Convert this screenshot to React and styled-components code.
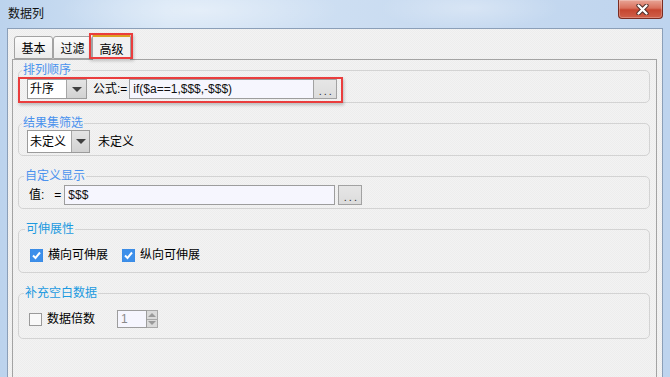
import React from 'react';
import styled, { createGlobalStyle } from 'styled-components';

const GlobalStyle = createGlobalStyle`
  html, body {
    margin: 0;
    padding: 0;
  }
  body {
    width: 670px;
    height: 377px;
    overflow: hidden;
    background: #c6daf0;
    font-family: "Liberation Sans", "Noto Sans CJK SC", sans-serif;
    font-size: 12px;
    color: #000;
  }
`;

const Window = styled.div`
  width: 670px;
  height: 377px;
  box-sizing: border-box;
  display: flex;
  flex-direction: column;
  padding: 0 7px;
  background:
    radial-gradient(ellipse 140px 30px at 200px 10px, rgba(255, 255, 255, 0.4), transparent),
    radial-gradient(ellipse 90px 22px at 470px 8px, rgba(255, 255, 255, 0.3), transparent),
    linear-gradient(90deg, #bcd3ed 0%, #d4e4f5 25%, #cadcf1 60%, #bed4ee 100%);
`;

const TitleBar = styled.div`
  height: 28px;
  flex: none;
  display: flex;
  justify-content: space-between;
  align-items: flex-start;
`;

const Caption = styled.div`
  padding: 6px 0 0 1px;
  font-size: 12px;
  line-height: 16px;
  color: #111;
`;

const CloseButton = styled.div`
  width: 45px;
  height: 19px;
  box-sizing: border-box;
  border: 1px solid #7a2c22;
  border-top: none;
  border-radius: 0 0 4px 4px;
  background: linear-gradient(180deg, #e8a596 0%, #d9705c 45%, #c64630 55%, #d0604a 100%);
  box-shadow: inset 0 0 0 1px rgba(255, 255, 255, 0.25);
  display: flex;
  align-items: center;
  justify-content: center;
  padding-left: 3px;
`;

const Client = styled.div`
  flex: 1;
  display: flex;
  flex-direction: column;
  min-height: 0;
  border: 1px solid #8b9fb8;
  border-bottom: none;
  padding: 4px 5px 0 4px;
  background-color: #f0f0f0;
  background-image: repeating-conic-gradient(#ededed 0 25%, #f3f3f3 0 50%);
  background-size: 2px 2px;
`;

const TabStrip = styled.div`
  height: 26px;
  flex: none;
  display: flex;
  align-items: flex-end;
  padding-left: 2px;
`;

const Tab = styled.div`
  position: relative;
  z-index: ${p => (p.$active ? 2 : 1)};
  width: 39px;
  height: ${p => (p.$active ? 26 : 23)}px;
  margin-bottom: ${p => (p.$active ? -1 : 0)}px;
  box-sizing: border-box;
  display: flex;
  align-items: center;
  justify-content: center;
  padding-top: 2px;
  border: 1px solid #a3a3a3;
  border-bottom: ${p => (p.$active ? 'none' : '1px solid #a3a3a3')};
  border-top: ${p => (p.$active ? '3px solid #dc9f22' : '1px solid #a3a3a3')};
  border-radius: 3px 3px 0 0;
  background: ${p => (p.$active ? '#f1f1f1' : 'linear-gradient(180deg, #fbfbfb, #ececec)')};
  font-size: 12px;
  line-height: 16px;

  &::after {
    content: ${p => (p.$active ? "''" : 'none')};
    position: absolute;
    top: -4px;
    left: -4px;
    right: -3px;
    bottom: 1px;
    border: 2px solid #ea3d3d;
    box-shadow: 1px 2px 3px rgba(0, 0, 0, 0.2);
  }
`;

const Pane = styled.div`
  flex: 1;
  display: flex;
  flex-direction: column;
  gap: 13px;
  border: 1px solid #a3a3a3;
  border-bottom: none;
  padding: 3px 6px 0 5px;
`;

const Group = styled.fieldset`
  margin: 0;
  min-width: 0;
  border: 1px solid #d3d3d3;
  border-radius: 5px;
  padding: ${p => p.$pad};
  display: flex;
  align-items: center;
`;

const Legend = styled.legend`
  padding: 0 1px;
  margin-left: -5px;
  font-size: 12px;
  line-height: 14px;
  color: ${p => p.$tone};
`;

const Row = styled.div`
  position: relative;
  display: flex;
  align-items: center;

  &::after {
    content: ${p => (p.$marked ? "''" : 'none')};
    position: absolute;
    top: -2px;
    left: -9px;
    right: -6px;
    bottom: -4px;
    border: 2px solid #ea3d3d;
    box-shadow: 1px 2px 3px rgba(0, 0, 0, 0.22);
    pointer-events: none;
  }
`;

const Combo = styled.div`
  width: ${p => p.$w}px;
  height: ${p => p.$h}px;
  box-sizing: border-box;
  display: flex;
  border: 1px solid #9b9b9b;
  background: #fff;
`;

const ComboText = styled.div`
  flex: 1;
  display: flex;
  align-items: center;
  padding-left: 2px;
  line-height: 16px;
`;

const ComboArrow = styled.div`
  width: ${p => p.$w}px;
  box-sizing: border-box;
  border-left: 1px solid #a6a6a6;
  background: linear-gradient(180deg, #e4e4e4, #d2d2d2);
  display: flex;
  align-items: center;
  justify-content: center;

  &::before {
    content: '';
    border-left: 5px solid transparent;
    border-right: 5px solid transparent;
    border-top: 5px solid #404040;
  }
`;

const Label = styled.span`
  line-height: 16px;
  white-space: pre;
  margin: ${p => p.$m || '0'};
`;

const Field = styled.div`
  width: ${p => p.$w}px;
  height: ${p => p.$h || 20}px;
  box-sizing: border-box;
  display: flex;
  align-items: center;
  padding-left: 3px;
  border: 1px solid #9d9d9d;
  background: #f6f6fe;
  font-size: 12px;
  color: ${p => (p.$dim ? '#8a8a8a' : '#111')};
`;

const DotsButton = styled.div`
  width: 24px;
  height: 20px;
  box-sizing: border-box;
  margin-left: ${p => p.$m || 0}px;
  border: 1px solid #a2a2a2;
  background: linear-gradient(180deg, #e6e6e6, #dcdcdc);
  display: flex;
  align-items: flex-end;
  justify-content: center;
  font-size: 11px;
  line-height: 14px;
  letter-spacing: 2px;
  padding-left: 2px;
  color: #333;
`;

const Check = styled.span`
  width: 13px;
  height: 13px;
  box-sizing: border-box;
  flex: none;
  display: flex;
  align-items: center;
  justify-content: center;
  border: 1px solid ${p => (p.$on ? '#3b8ce6' : '#9a9a9a')};
  background: ${p => (p.$on ? '#3d8fea' : '#f9f9f9')};
`;

const CheckItem = styled.div`
  display: flex;
  align-items: center;
  gap: 5px;
  margin-right: ${p => p.$m || 0}px;
`;

const Spinner = styled.div`
  display: flex;
  margin-left: 22px;
`;

const SpinButtons = styled.div`
  width: 11px;
  height: 18px;
  display: flex;
  flex-direction: column;
`;

const SpinButton = styled.div`
  flex: 1;
  box-sizing: border-box;
  border: 1px solid #a8a8a8;
  border-left: none;
  border-top: ${p => (p.$down ? 'none' : '1px solid #a8a8a8')};
  background: #dadada;
  display: flex;
  align-items: center;
  justify-content: center;

  &::before {
    content: '';
    border-left: 4px solid transparent;
    border-right: 4px solid transparent;
    ${p => (p.$down ? 'border-top: 4px solid #9a9a9a;' : 'border-bottom: 4px solid #9a9a9a;')}
  }
`;

const Tick = () => (
  <svg width="11" height="11" viewBox="0 0 11 11">
    <path d="M2 5.5 L4.5 8 L9 2.5" fill="none" stroke="#fff" strokeWidth="2" />
  </svg>
);

const CloseGlyph = () => (
  <svg width="13" height="11" viewBox="0 0 13 11">
    <path d="M2.5 1.5 L10.5 9.5 M10.5 1.5 L2.5 9.5" stroke="#4a2a26" strokeWidth="4.2" strokeLinecap="round" />
    <path d="M2.5 1.5 L10.5 9.5 M10.5 1.5 L2.5 9.5" stroke="#fff" strokeWidth="2.4" strokeLinecap="round" />
  </svg>
);

export default function App() {
  return (
    <>
      <GlobalStyle />
      <Window>
        <TitleBar>
          <Caption>数据列</Caption>
          <CloseButton>
            <CloseGlyph />
          </CloseButton>
        </TitleBar>
        <Client>
          <TabStrip>
            <Tab>基本</Tab>
            <Tab>过滤</Tab>
            <Tab $active>高级</Tab>
          </TabStrip>
          <Pane>
            <Group $pad="2px 8px 3px">
              <Legend $tone="#4a92ee">排列顺序</Legend>
              <Row $marked>
                <Combo $w={60} $h={20}>
                  <ComboText>升序</ComboText>
                  <ComboArrow $w={20} />
                </Combo>
                <Label $m="0 2px 0 6px">公式:=</Label>
                <Field $w={185}>if($a==1,$$$,-$$$)</Field>
                <DotsButton $m={-1}>...</DotsButton>
              </Row>
            </Group>
            <Group $pad="0 8px 2px">
              <Legend $tone="#4a92ee">结果集筛选</Legend>
              <Row>
                <Combo $w={63} $h={23}>
                  <ComboText>未定义</ComboText>
                  <ComboArrow $w={18} />
                </Combo>
                <Label $m="0 0 0 8px">未定义</Label>
              </Row>
            </Group>
            <Group $pad="2px 8px 3px 10px">
              <Legend $tone="#4a92ee">自定义显示</Legend>
              <Row>
                <Label>值:</Label>
                <Label $m="0 3px 0 10px">=</Label>
                <Field $w={271}>$$$</Field>
                <DotsButton $m={3}>...</DotsButton>
              </Row>
            </Group>
            <Group $pad="11px 8px 9px 11px">
              <Legend $tone="#1c9ae0">可伸展性</Legend>
              <Row>
                <CheckItem $m={14}>
                  <Check $on>
                    <Tick />
                  </Check>
                  <Label>横向可伸展</Label>
                </CheckItem>
                <CheckItem>
                  <Check $on>
                    <Tick />
                  </Check>
                  <Label>纵向可伸展</Label>
                </CheckItem>
              </Row>
            </Group>
            <Group $pad="10px 8px 10px 10px">
              <Legend $tone="#1c9ae0">补充空白数据</Legend>
              <Row>
                <CheckItem>
                  <Check />
                  <Label>数据倍数</Label>
                </CheckItem>
                <Spinner>
                  <Field $w={30} $h={18} $dim>1</Field>
                  <SpinButtons>
                    <SpinButton />
                    <SpinButton $down />
                  </SpinButtons>
                </Spinner>
              </Row>
            </Group>
          </Pane>
        </Client>
      </Window>
    </>
  );
}
